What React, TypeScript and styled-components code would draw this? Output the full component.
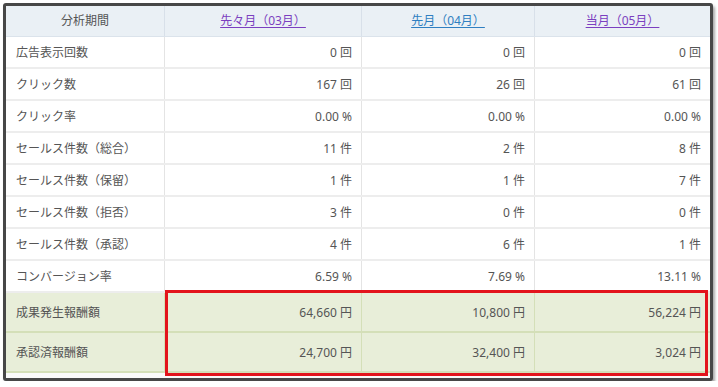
import styled, { createGlobalStyle } from "styled-components";

const GlobalStyle = createGlobalStyle`
  body {
    margin: 0;
    background: #ffffff;
    font-family: "Noto Sans", "Noto Sans CJK JP", sans-serif;
  }
`

type Tone = "plain" | "green"

interface IRow {
  label: string
  values: string[]
  tone: Tone
}

const rows: IRow[] = [
  { label: "広告表示回数", values: ["0 回", "0 回", "0 回"], tone: "plain" },
  { label: "クリック数", values: ["167 回", "26 回", "61 回"], tone: "plain" },
  { label: "クリック率", values: ["0.00 %", "0.00 %", "0.00 %"], tone: "plain" },
  { label: "セールス件数（総合）", values: ["11 件", "2 件", "8 件"], tone: "plain" },
  { label: "セールス件数（保留）", values: ["1 件", "1 件", "7 件"], tone: "plain" },
  { label: "セールス件数（拒否）", values: ["3 件", "0 件", "0 件"], tone: "plain" },
  { label: "セールス件数（承認）", values: ["4 件", "6 件", "1 件"], tone: "plain" },
  { label: "コンバージョン率", values: ["6.59 %", "7.69 %", "13.11 %"], tone: "plain" },
  { label: "成果発生報酬額", values: ["64,660 円", "10,800 円", "56,224 円"], tone: "green" },
  { label: "承認済報酬額", values: ["24,700 円", "32,400 円", "3,024 円"], tone: "green" },
]

const periods = [
  { text: "先々月（03月）", visited: true },
  { text: "先月（04月）", visited: false },
  { text: "当月（05月）", visited: true },
]

export default function App() {
  return (
    <>
      <GlobalStyle />
      <Frame>
        <HeadRow>
          <HeadCell>分析期間</HeadCell>
          {periods.map((p) => (
            <HeadCell key={p.text}>
              <PeriodLink href="#" $visited={p.visited}>{p.text}</PeriodLink>
            </HeadCell>
          ))}
        </HeadRow>
        {rows.map((r) => (
          <Row key={r.label} $tone={r.tone}>
            <LabelCell $tone={r.tone}>{r.label}</LabelCell>
            {r.values.map((v, i) => (
              <ValueCell key={i} $tone={r.tone}>{v}</ValueCell>
            ))}
          </Row>
        ))}
        <Highlight />
      </Frame>
    </>
  );
}

const Frame = styled.div`
  position: relative;
  box-sizing: border-box;
  margin: 3px 0 0 3px;
  width: 710px;
  height: 378px;
  border: 3px solid #474747;
  border-radius: 3px;
  box-shadow: 2px 3px 3px rgba(0, 0, 0, 0.35);
  background: #fafafa;
  overflow: hidden;
`
const HeadRow = styled.div`
  display: grid;
  grid-template-columns: 159px 197px 173px 175px;
  height: 31px;
  background: #eaf0f5;
  border-bottom: 1px solid #dbe3eb;
  box-sizing: border-box;
`
const HeadCell = styled.div`
  display: flex;
  align-items: center;
  justify-content: center;
  font-size: 12px;
  color: #555555;
  border-right: 1px solid #d8e0e9;
  padding-bottom: 2px;
  &:last-child {
    border-right: none;
  }
`
const PeriodLink = styled.a<{ $visited: boolean }>`
  color: ${(p) => (p.$visited ? "#7b3fc0" : "#2f7fc1")};
  text-decoration: underline;
  text-underline-offset: 2px;
`
const Row = styled.div<{ $tone: Tone }>`
  display: grid;
  grid-template-columns: 159px 197px 173px 175px;
  box-sizing: border-box;
  height: ${(p) => (p.$tone === "green" ? "40px" : "32px")};
  background: ${(p) => (p.$tone === "green" ? "#e8eed9" : "#ffffff")};
  border-bottom: 2px solid ${(p) => (p.$tone === "green" ? "#d4dfb8" : "#ededed")};
`
const LabelCell = styled.div<{ $tone: Tone }>`
  display: flex;
  align-items: center;
  padding-left: 10px;
  font-size: 12px;
  color: #555555;
  border-right: 1px solid ${(p) => (p.$tone === "green" ? "#d4dfb8" : "#e4e4e4")};
`
const ValueCell = styled(LabelCell)`
  justify-content: flex-end;
  padding-left: 0;
  padding-right: 9px;
  &:last-child {
    border-right: none;
  }
`
const Highlight = styled.div`
  position: absolute;
  left: 159px;
  top: 284px;
  width: 543px;
  height: 86px;
  box-sizing: border-box;
  border: 3px solid #e3141c;
  pointer-events: none;
`
